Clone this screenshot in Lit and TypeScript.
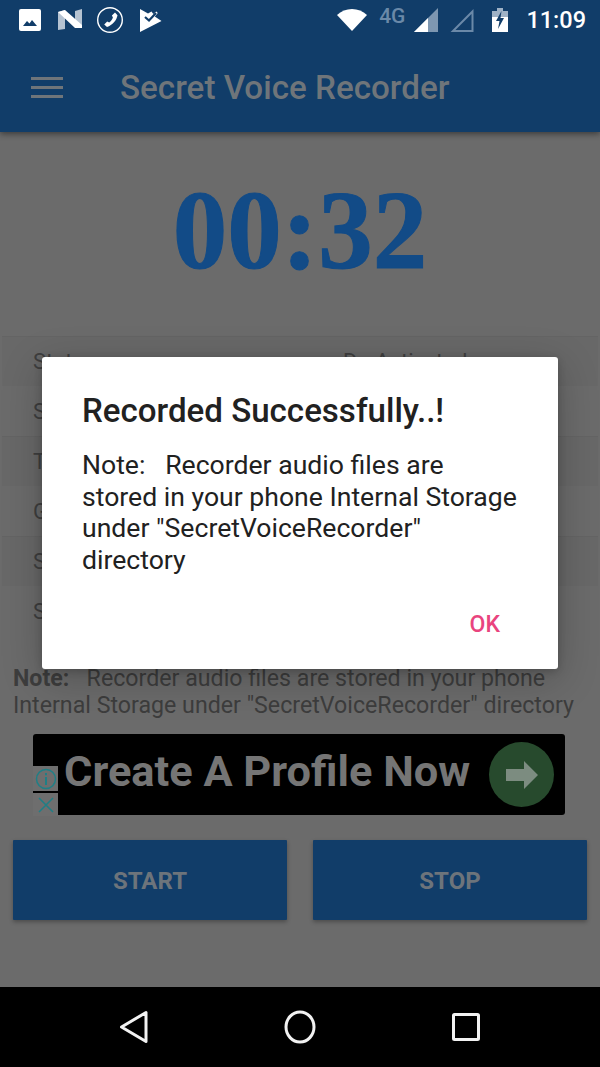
import { LitElement, html, css } from "lit";
import { customElement } from "lit/decorators.js";

const rows: [string, string][] = [
  ["Status", "De-Activated"],
  ["Storage", "Internal"],
  ["Type", "Audio"],
  ["Gain", "Normal"],
  ["Sample Rate", "44100 Hz"],
  ["Size", "256 KB"],
];

@customElement("app-root")
export class AppRoot extends LitElement {
  static styles = css`
    :host {
      display: block;
      position: relative;
      width: 600px;
      height: 1067px;
      overflow: hidden;
      background: #6b6b6b;
      font-family: Roboto, "Liberation Sans", sans-serif;
    }
    .page { display: flex; flex-direction: column; height: 1067px; }
    .header {
      height: 132px;
      flex: none;
      background: #113d69;
      box-shadow: 0 2px 6px rgba(0, 0, 0, 0.45);
      display: flex;
      flex-direction: column;
      position: relative;
    }
    .status { height: 40px; display: flex; align-items: center; padding: 0 14px 0 19px; color: #fff; }
    .status svg { display: block; flex: none; }
    .left { display: flex; align-items: center; }
    .right { margin-left: auto; display: flex; align-items: center; }
    .net { font-size: 21px; font-weight: 500; color: #6b89a8; margin: -8px 9px 0 12px; }
    .time { font-size: 23.5px; font-weight: 500; margin-left: 18px; }
    .bar { flex: 1; display: flex; align-items: center; padding: 2px 0 0 31px; }
    .title { font-size: 33.2px; font-weight: 500; color: #6f757a; margin-left: 57px; white-space: nowrap; }
    .menu { display: flex; flex-direction: column; gap: 6px; width: 32px; }
    .menu i { display: block; height: 3px; background: #6f757a; }
    .timer {
      height: 204px;
      flex: none;
      display: flex;
      align-items: center;
      justify-content: center;
      font-family: "Liberation Serif", serif;
      font-weight: 700;
      font-size: 109px;
      color: #124b87;
      -webkit-text-stroke: 1px #124b87;
      padding-bottom: 6px;
      box-sizing: border-box;
    }
    .timer span { display: block; transform: scaleY(1.03); }
    .table { flex: none; padding: 0 2px; }
    .row {
      height: 50px;
      display: flex;
      align-items: center;
      padding-left: 31px;
      font-size: 22px;
      color: #3f3f3f;
      background: #686868;
      border-top: 1px solid #646464;
      box-sizing: border-box;
    }
    .row:nth-child(even) { background: #6b6b6b; border-top-color: #6b6b6b; }
    .row span:first-child { width: 310px; }
    .note {
      margin: 29px 13px 0;
      font-size: 23.2px;
      line-height: 27px;
      color: #3d3d3d;
      white-space: pre;
    }
    .note b { font-weight: 700; }
    .ad {
      position: relative;
      flex: none;
      height: 81px;
      margin: 15px 35px 0 33px;
      background: #000;
      border-radius: 3px;
      display: flex;
      align-items: center;
      padding-left: 31px;
    }
    .ad-text { font-size: 43.4px; font-weight: 700; color: #757575; white-space: nowrap; margin-top: -7px; }
    .go {
      margin-left: auto;
      margin-right: 11px;
      width: 65px;
      height: 65px;
      border-radius: 50%;
      background: #274a2d;
      display: flex;
      align-items: center;
      justify-content: center;
      flex: none;
    }
    .ad-badge { position: absolute; left: 0; bottom: -1px; display: flex; flex-direction: column; gap: 2px; }
    .ad-badge div { width: 25px; background: #6e6e6e; display: flex; align-items: center; justify-content: center; }
    .ad-badge .i { height: 25px; }
    .ad-badge .x { height: 23px; }
    .buttons { flex: none; display: flex; gap: 26px; margin: 25px 13px 0; }
    .btn {
      flex: 1;
      height: 80px;
      box-sizing: border-box;
      padding-top: 2px;
      background: #113d69;
      color: #6d747b;
      font-size: 24px;
      font-weight: 700;
      display: flex;
      align-items: center;
      justify-content: center;
      box-shadow: 0 2px 4px rgba(0, 0, 0, 0.3);
      border-radius: 1px;
    }
    .nav {
      margin-top: auto;
      flex: none;
      height: 80px;
      background: #000;
      display: grid;
      grid-template-columns: 266px 68px 266px;
      align-items: center;
      justify-items: center;
    }
    .nav svg { display: block; }
    .nav .back { justify-self: end; margin-right: 117px; }
    .nav .sq { justify-self: start; margin-left: 118px; }
    .dialog {
      position: absolute;
      left: 42px;
      top: 357px;
      width: 516px;
      height: 312px;
      background: #fff;
      border-radius: 3px;
      box-shadow: 0 10px 40px rgba(0, 0, 0, 0.22), 0 2px 8px rgba(0, 0, 0, 0.2);
      box-sizing: border-box;
      padding: 33px 40px 0;
      display: flex;
      flex-direction: column;
    }
    .dialog h2 { margin: 0; font-size: 33.1px; line-height: 41px; font-weight: 500; color: #212121; white-space: nowrap; }
    .dialog p { margin: 18px 0 0; font-size: 26.6px; line-height: 31.5px; color: #212121; white-space: pre; }
    .ok { position: absolute; right: 58px; bottom: 31px; font-size: 23px; font-weight: 500; color: #e9447e; }
  `;

  render() {
    return html`
      <div class="page">
        <div class="header">
          <div class="status">
            <div class="left">
              <svg width="22" height="22" viewBox="0 0 22 22">
                <rect width="22" height="22" rx="2" fill="#fff" />
                <path d="M4 17l4-5 2.500 2.500 2.500-3.500 5 6z" fill="#113d69" />
              </svg>
              <svg width="25" height="22" viewBox="0 0 25 22" style="margin-left:17px">
                <path d="M0 3l7-2v19l-7 1z M17 2l7-2v18l-7 1z" fill="#b5c3d2" />
                <path d="M0 3l7-2 17 15-0 3-7 0z" fill="#fff" />
              </svg>
              <svg width="28" height="28" viewBox="0 0 28 28" style="margin-left:13px">
                <circle cx="14" cy="14" r="12.300" fill="none" stroke="#fff" stroke-width="1.400" />
                <path d="M19 6.500l2.500 2.800c-.8 5-5 10-10.500 11.700l-2.800-2.400 3-3 2 .8c1.800-1.400 3-3 3.700-5l-1-2z" fill="#fff" />
              </svg>
              <svg width="22" height="23" viewBox="0 0 22 23" style="margin-left:16px">
                <path d="M0 0l8 4.500 3.500-2 1.800 2.500 3-2.500 1.500 1.500-3 3.500 6.700 4.500-21.500 11z" fill="#fff" />
                <path d="M5 8l4 3.500 7-7.500" fill="none" stroke="#113d69" stroke-width="2.200" />
              </svg>
            </div>
            <div class="right">
              <svg width="30" height="22" viewBox="0 0 30 22"><path d="M0 6C8-2 22-2 30 6L15 22z" fill="#fff" /></svg>
              <span class="net">4G</span>
              <svg width="24" height="24" viewBox="0 0 24 24">
                <path d="M24 0v24H0z" fill="#7e97b1" />
                <path d="M14 10v14H0z" fill="#fff" />
              </svg>
              <svg width="24" height="24" viewBox="0 0 24 24" style="margin-left:12px">
                <path d="M22.500 3.500v19.500H3z" fill="none" stroke="#6b89a8" stroke-width="2" />
              </svg>
              <svg width="16" height="24" viewBox="0 0 16 24" style="margin-left:18px">
                <path d="M5 0h6v3h5v6H0V3h5z" fill="#9fb2c6" />
                <path d="M0 9h16v15H0z" fill="#fff" />
                <path d="M9.500 3L4 13h3.500L6 21l6-11H8.500z" fill="#113d69" />
              </svg>
              <span class="time">11:09</span>
            </div>
          </div>
          <div class="bar">
            <div class="menu"><i></i><i></i><i></i></div>
            <div class="title">Secret Voice Recorder</div>
          </div>
        </div>

        <div class="timer"><span>00:32</span></div>

        <div class="table">
          ${rows.map(([k, v]) => html`<div class="row"><span>${k}</span><span>${v}</span></div>`)}
        </div>

        <div class="note"><b>Note:</b>   Recorder audio files are stored in your phone<br />Internal Storage under "SecretVoiceRecorder" directory</div>

        <div class="ad">
          <span class="ad-text">Create A Profile Now</span>
          <div class="go">
            <svg width="32" height="28" viewBox="0 0 32 28">
              <path d="M0 8h18V0l14 14-14 14v-8H0z" fill="#7c8c80" />
            </svg>
          </div>
          <div class="ad-badge">
            <div class="i">
              <svg width="22" height="22" viewBox="0 0 22 22">
                <circle cx="11" cy="11" r="9.500" fill="none" stroke="#1f7f86" stroke-width="1.500" />
                <path d="M11 9v8M11 5v2.200" stroke="#1f7f86" stroke-width="2" />
              </svg>
            </div>
            <div class="x">
              <svg width="18" height="18" viewBox="0 0 18 18">
                <path d="M2 2l14 14M16 2L2 16" stroke="#1f7f86" stroke-width="1.500" />
              </svg>
            </div>
          </div>
        </div>

        <div class="buttons">
          <div class="btn">START</div>
          <div class="btn">STOP</div>
        </div>

        <div class="nav">
          <svg class="back" width="30" height="34" viewBox="0 0 30 34">
            <path d="M27 2.500V31.500L2.500 17z" fill="none" stroke="#f2f2f2" stroke-width="3" stroke-linejoin="round" />
          </svg>
          <svg width="32" height="34" viewBox="0 0 32 34">
            <ellipse cx="16" cy="17" rx="14" ry="15" fill="none" stroke="#f2f2f2" stroke-width="3" />
          </svg>
          <svg class="sq" width="28" height="28" viewBox="0 0 28 28">
            <rect x="1.500" y="1.500" width="25" height="25" rx="1" fill="none" stroke="#f2f2f2" stroke-width="3" />
          </svg>
        </div>
      </div>

      <div class="dialog">
        <h2>Recorded Successfully..!</h2>
        <p>Note:   Recorder audio files are<br />stored in your phone Internal Storage<br />under "SecretVoiceRecorder"<br />directory</p>
        <div class="ok">OK</div>
      </div>
    `;
  }
}
